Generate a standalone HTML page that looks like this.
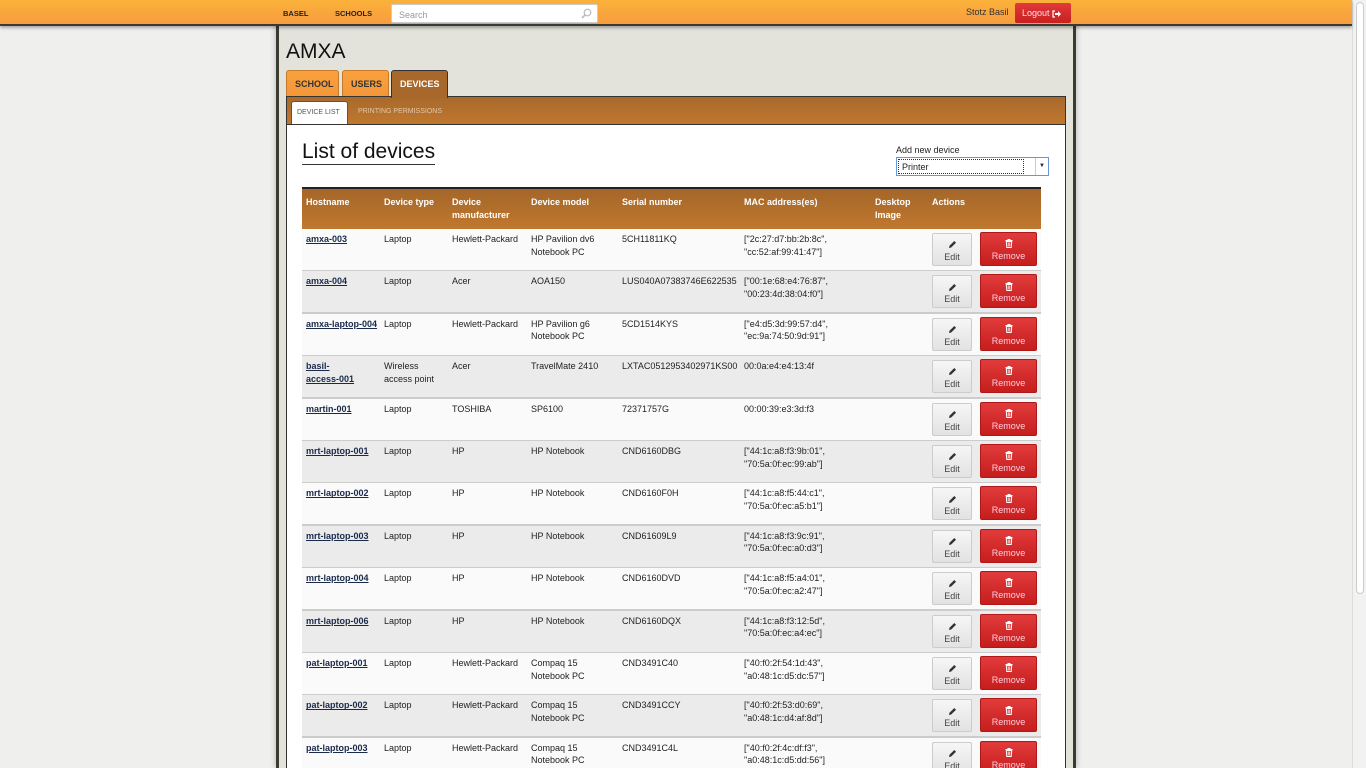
<!DOCTYPE html>
<html style="width:1366px;height:768px;overflow:hidden"><head><meta charset="utf-8"><style>
*{box-sizing:border-box;margin:0;padding:0}
body{width:1366px;height:768px;overflow:hidden;background:#efefed;font-family:"Liberation Sans",Arial,sans-serif;font-size:9px;color:#222;position:relative}
.top{position:absolute;left:0;top:0;width:1352px;height:26px;background:linear-gradient(#fbb23a,#f79c3f);border-bottom:2px solid #3a3a33;box-shadow:0 2px 3px rgba(0,0,0,.3);z-index:5}
.top b{position:absolute;top:9px;font-size:7.5px;color:#222}
.search{position:absolute;left:391px;top:4px;width:207px;height:19px;background:#fff;border:1px solid #ccc;border-radius:2px;color:#999;font-size:9px;padding:5px 7px}
.user{position:absolute;left:966px;top:7px;font-size:9px;color:#333}
.logout{position:absolute;left:1015px;top:3px;width:56px;height:20px;background:linear-gradient(#e03a3a,#c91f1f);border-radius:2px;color:#fde;font-size:9px;padding:5px 7px}
.sb{position:absolute;left:1352px;top:0;width:14px;height:768px;background:#f2f2f2;border-left:1px solid #ddd}
.sb i{position:absolute;left:3px;top:2px;width:8px;height:592px;background:#fff;border:1px solid #ccc;border-radius:4px}
.wrap{position:absolute;left:276px;top:0;width:800px;height:768px;background:#e3e3dc;border-left:3px solid #3b3b2f;border-right:3px solid #3b3b2f;box-shadow:0 0 6px rgba(0,0,0,.25)}
h1{position:absolute;left:286px;top:40px;font-size:21px;font-weight:normal;color:#111}
.tab{position:absolute;top:70px;height:27px;border:1px solid #c57a2a;border-bottom:none;border-radius:3px 3px 0 0;background:linear-gradient(#f9a13e,#f39638);font-weight:bold;font-size:9px;color:#333;padding:8px 8px}
.band{position:absolute;left:286px;top:96px;width:780px;height:29px;background:linear-gradient(#a8692b,#c0782f);border:1px solid #333;border-bottom:none}
.sub1{position:absolute;left:291px;top:101px;width:57px;height:24px;background:#fff;border:1px solid #555;border-bottom:none;border-radius:3px 3px 0 0;font-size:7px;color:#555;padding:7px 5px}
.sub2{position:absolute;left:358px;top:108px;font-size:7px;color:#e0c8a8}
.panel{position:absolute;left:286px;top:124px;width:780px;height:644px;background:#fff;border:1px solid #333;border-bottom:none}
h2{position:absolute;left:302px;top:140px;font-size:21px;font-weight:normal;color:#111;border-bottom:1px solid #333;line-height:24px}
.lab{position:absolute;left:896px;top:145px;font-size:9px}
.sel{position:absolute;left:896px;top:157px;width:153px;height:19px;border:1px solid #6a96d8;background:#fff;font-size:9px}
.sel span{position:absolute;left:1px;top:1px;width:126px;height:15px;border:1px dotted #333;padding:2px 3px}
.sel i{position:absolute;right:0;top:0;width:13px;height:17px;border-left:1px solid #ccc;font-style:normal;font-size:6px;text-align:center;line-height:17px}
.th{position:absolute;left:302px;top:187px;width:739px;height:42px;background:linear-gradient(#a46629,#c0782f);border-top:2px solid #222;color:#fff;font-weight:bold}
.c{position:absolute;line-height:12.5px}
#rows{position:absolute;left:0;top:0;width:1366px;height:768px;overflow:hidden}
.row{position:absolute;left:302px;width:739px;height:43px;border-bottom:2px solid #ccc}
.row a{color:#1a2a4a;font-weight:bold;text-decoration:underline}
.ed{position:absolute;left:630px;top:4px;width:40px;height:33px;background:linear-gradient(#f6f6f6,#e2e2e2);border:1px solid #ccc;border-radius:2px;text-align:center;color:#444;padding-top:4px;line-height:13px}
.rm{position:absolute;left:678px;top:3px;width:57px;height:34px;background:linear-gradient(#e13b3b,#c61d1d);border:1px solid #b01818;border-radius:2px;text-align:center;color:#fcd;padding-top:4px;line-height:13px}
svg{vertical-align:middle}
</style></head><body>
<div class="wrap"></div>
<div class="sb"><i></i></div>
<div class="top"><b style="left:283px">BASEL</b><b style="left:335px">SCHOOLS</b>
<div class="search">Search<svg style="position:absolute;right:5px;top:3px" width="11" height="11" viewBox="0 0 11 11"><circle cx="6.5" cy="4.5" r="3.3" fill="none" stroke="#bbb" stroke-width="1.2"/><path d="M4.2 6.8L1 10" stroke="#bbb" stroke-width="1.6"/></svg></div>
<div class="user">Stotz Basil</div><div class="logout">Logout <svg width="9" height="8" viewBox="0 0 9 8"><path d="M3 1H1v6h2" fill="none" stroke="#fff" stroke-width="1.2"/><path d="M3 3h3V1l3 3-3 3V5H3z" fill="#fff"/></svg></div></div>
<h1>AMXA</h1>
<div class="tab" style="left:286px;width:53px">SCHOOL</div>
<div class="tab" style="left:342px;width:47px">USERS</div>
<div class="band"></div>
<div class="tab" style="left:391px;width:57px;height:28px;background:#a8682b;border-color:#333;color:#fff;z-index:2">DEVICES</div>
<div class="sub1">DEVICE LIST</div><div class="sub2">PRINTING PERMISSIONS</div>
<div class="panel"></div>
<h2>List of devices</h2>
<div class="lab">Add new device</div>
<div class="sel"><span>Printer</span><i>▼</i></div>
<div class="th">
<div class="c" style="left:4px;top:7px">Hostname</div><div class="c" style="left:82px;top:7px">Device type</div><div class="c" style="left:150px;top:7px">Device<br>manufacturer</div><div class="c" style="left:229px;top:7px">Device model</div><div class="c" style="left:320px;top:7px">Serial number</div><div class="c" style="left:442px;top:7px">MAC address(es)</div><div class="c" style="left:573px;top:7px">Desktop<br>Image</div><div class="c" style="left:630px;top:7px">Actions</div>
</div>
<div id="rows"></div>
<script>
var d=[["amxa-003","Laptop","Hewlett-Packard","HP Pavilion dv6<br>Notebook PC","5CH11811KQ",'["2c:27:d7:bb:2b:8c",<br>"cc:52:af:99:41:47"]'],
["amxa-004","Laptop","Acer","AOA150","LUS040A07383746E622535",'["00:1e:68:e4:76:87",<br>"00:23:4d:38:04:f0"]'],
["amxa-laptop-004","Laptop","Hewlett-Packard","HP Pavilion g6<br>Notebook PC","5CD1514KYS",'["e4:d5:3d:99:57:d4",<br>"ec:9a:74:50:9d:91"]'],
["basil-<br>access-001","Wireless<br>access point","Acer","TravelMate 2410","LXTAC0512953402971KS00","00:0a:e4:e4:13:4f"],
["martin-001","Laptop","TOSHIBA","SP6100","72371757G","00:00:39:e3:3d:f3"],
["mrt-laptop-001","Laptop","HP","HP Notebook","CND6160DBG",'["44:1c:a8:f3:9b:01",<br>"70:5a:0f:ec:99:ab"]'],
["mrt-laptop-002","Laptop","HP","HP Notebook","CND6160F0H",'["44:1c:a8:f5:44:c1",<br>"70:5a:0f:ec:a5:b1"]'],
["mrt-laptop-003","Laptop","HP","HP Notebook","CND61609L9",'["44:1c:a8:f3:9c:91",<br>"70:5a:0f:ec:a0:d3"]'],
["mrt-laptop-004","Laptop","HP","HP Notebook","CND6160DVD",'["44:1c:a8:f5:a4:01",<br>"70:5a:0f:ec:a2:47"]'],
["mrt-laptop-006","Laptop","HP","HP Notebook","CND6160DQX",'["44:1c:a8:f3:12:5d",<br>"70:5a:0f:ec:a4:ec"]'],
["pat-laptop-001","Laptop","Hewlett-Packard","Compaq 15<br>Notebook PC","CND3491C40",'["40:f0:2f:54:1d:43",<br>"a0:48:1c:d5:dc:57"]'],
["pat-laptop-002","Laptop","Hewlett-Packard","Compaq 15<br>Notebook PC","CND3491CCY",'["40:f0:2f:53:d0:69",<br>"a0:48:1c:d4:af:8d"]'],
["pat-laptop-003","Laptop","Hewlett-Packard","Compaq 15<br>Notebook PC","CND3491C4L",'["40:f0:2f:4c:df:f3",<br>"a0:48:1c:d5:dd:56"]']];
var pen='<svg width="9" height="9" viewBox="0 0 9 9"><path d="M1 8l.5-2.2L6.3 1 8 2.7 3.2 7.5z" fill="#333"/></svg>';
var bin='<svg width="8" height="9" viewBox="0 0 8 9"><path d="M0.5 1.5h7M3 1.5V.5h2v1" stroke="#fff" fill="none"/><path d="M1.3 2.5h5.4L6.2 8.5H1.8z" fill="none" stroke="#fff"/><path d="M3.2 3.5v4M4.8 3.5v4" stroke="#fff" stroke-width=".8"/></svg>';
var h="",L=[4,82,150,229,320,442];
d.forEach(function(r,i){var t=229+i*42.4;h+='<div class="row" style="top:'+t+'px;background:'+(i%2?'#ebebeb':'#fafafa')+'">';
r.forEach(function(v,j){h+='<div class="c" style="left:'+L[j]+'px;top:4px">'+(j==0?'<a>'+v+'</a>':v)+'</div>'});
h+='<div class="ed">'+pen+'<br>Edit</div><div class="rm">'+bin+'<br>Remove</div></div>'});
document.getElementById("rows").innerHTML=h;
</script>
</body></html>
